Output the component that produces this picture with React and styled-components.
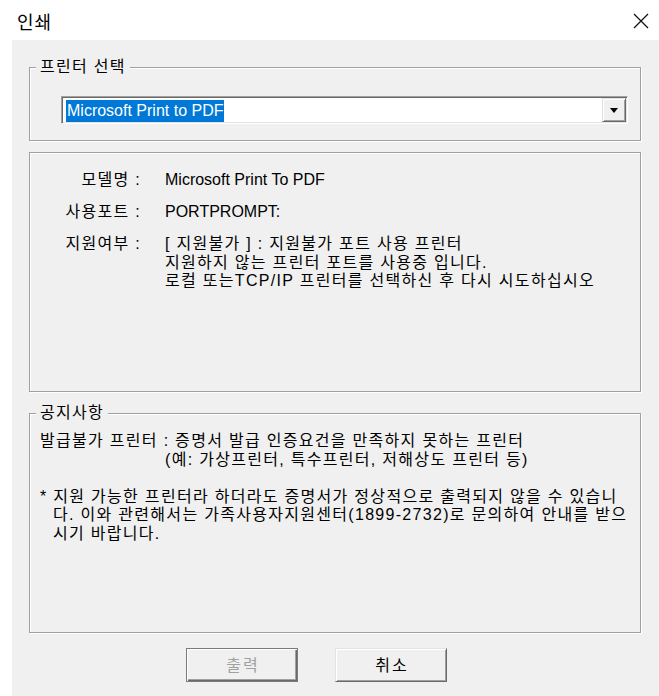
import React from "react";
import styled, { createGlobalStyle } from "styled-components";

const GlobalStyle = createGlobalStyle`
  html, body {
    margin: 0;
    padding: 0;
    background: #ffffff;
  }
  body {
    font-family: "Liberation Sans", "Noto Sans CJK KR", sans-serif;
    color: #000;
  }
`;

const KO_SPACING = "1.3px";

const Window = styled.div`
  width: 659px;
  height: 696px;
  display: flex;
  flex-direction: column;
  overflow: hidden;
  background: #fff;
`;

const TitleBar = styled.div`
  height: 40px;
  flex: none;
  display: flex;
  align-items: center;
  justify-content: space-between;
  padding: 0 10px 0 17px;
`;

const Title = styled.span`
  font-family: "Noto Sans CJK KR", sans-serif;
  font-size: 18px;
  letter-spacing: 1px;
  line-height: 20px;
  padding-top: 1px;
`;

const CloseButton = styled.button`
  width: 16px;
  height: 16px;
  padding: 0;
  border: none;
  background: none;
  display: flex;
  margin-top: 2px;
`;

const Client = styled.div`
  flex: 1;
  margin-left: 12px;
  background: #f0f0f0;
  padding: 17px 17px 0 17px;
  display: flex;
  flex-direction: column;
`;

const Group = styled.fieldset`
  margin: ${(p) => p.$top || 0}px 0 0 0;
  min-width: 0;
  width: 612px;
  box-sizing: border-box;
  height: ${(p) => p.$height}px;
  padding: 0;
  border: 1px solid #a0a0a0;
  box-shadow: 1px 1px 0 #fff, inset 1px 1px 0 #fff;
`;

const Legend = styled.legend`
  padding: 0 4px 0 4px;
  margin-left: 6px;
  font-size: 16px;
  letter-spacing: ${KO_SPACING};
  line-height: 20px;
  background: #f0f0f0;
`;

const GroupBody = styled.div`
  padding: ${(p) => p.$pad};
`;

const Combo = styled.div`
  height: 28px;
  box-sizing: border-box;
  display: flex;
  align-items: center;
  justify-content: space-between;
  background: #fff;
  border: 1px solid;
  border-color: #a0a0a0 #fff #fff #a0a0a0;
  box-shadow: inset 1px 1px 0 #696969, inset -1px -1px 0 #e3e3e3;
  padding: 1px 1px 1px 4px;
`;

const Selected = styled.span`
  background: #0078d7;
  color: #fff;
  font-size: 16px;
  line-height: 22px;
  padding: 0 1px;
  margin-top: 1px;
`;

const DropButton = styled.div`
  width: 24px;
  height: 24px;
  box-sizing: border-box;
  background: #f0f0f0;
  border: 1px solid;
  border-color: #e3e3e3 #696969 #696969 #e3e3e3;
  box-shadow: inset 1px 1px 0 #fff, inset -1px -1px 0 #a0a0a0;
  display: flex;
  align-items: center;
  justify-content: center;
`;

const InfoGrid = styled.div`
  display: grid;
  grid-template-columns: 111px 1fr;
  column-gap: 24px;
  row-gap: 13.5px;
  font-size: 16px;
  line-height: 18.5px;
`;

const Label = styled.div`
  text-align: right;
  white-space: nowrap;
  letter-spacing: ${KO_SPACING};
`;

const Value = styled.div`
  white-space: nowrap;
  letter-spacing: ${(p) => (p.$ko ? KO_SPACING : "0")};
`;

const NoticeText = styled.div`
  font-size: 16px;
  line-height: 18.5px;
  white-space: nowrap;
  letter-spacing: ${KO_SPACING};
`;

const Line = styled.div`
  padding-left: ${(p) => p.$indent || 0}px;
  min-height: 18.5px;
`;

const Bullet = styled.div`
  padding-left: 13px;
  text-indent: -13px;
`;

const ButtonRow = styled.div`
  display: flex;
  gap: 37px;
  padding-left: 157px;
  margin-top: 15px;
`;

const DialogButton = styled.button`
  width: 112px;
  height: 34px;
  box-sizing: border-box;
  font-family: "Noto Sans CJK KR", sans-serif;
  font-size: 16px;
  letter-spacing: 2px;
  background: #f0f0f0;
  color: ${(p) => (p.disabled ? "#a0a0a0" : "#000")};
  border: 1px solid;
  border-color: ${(p) =>
    p.disabled ? "#7a7a7a" : "#e3e3e3 #696969 #696969 #e3e3e3"};
  box-shadow: ${(p) =>
    p.disabled
      ? "inset 1px 1px 0 #fff, inset -1px -1px 0 #696969, inset -2px -2px 0 #a0a0a0"
      : "inset 1px 1px 0 #fff, inset -1px -1px 0 #a0a0a0"};
  padding: 0 0 2px 2px;
`;

const App = () => {
  return (
    <Window>
      <GlobalStyle />
      <TitleBar>
        <Title>인쇄</Title>
        <CloseButton aria-label="닫기">
          <svg width="16" height="16" viewBox="0 0 16 16">
            <path d="M1 1 L15 15 M15 1 L1 15" stroke="#111" strokeWidth="1.3" fill="none" />
          </svg>
        </CloseButton>
      </TitleBar>
      <Client>
        <Group $height={84}>
          <Legend>프린터 선택</Legend>
          <GroupBody $pad="19px 12px 0 31px">
            <Combo>
              <Selected>Microsoft Print to PDF</Selected>
              <DropButton>
                <svg width="8" height="5" viewBox="0 0 8 5">
                  <path d="M0 0 H8 L4 5 Z" fill="#000" />
                </svg>
              </DropButton>
            </Combo>
          </GroupBody>
        </Group>

        <Group $top={11} $height={240}>
          <GroupBody $pad="18px 0 0 0">
            <InfoGrid>
              <Label>모델명 :</Label>
              <Value>Microsoft Print To PDF</Value>
              <Label>사용포트 :</Label>
              <Value>PORTPROMPT:</Value>
              <Label>지원여부 :</Label>
              <Value $ko>
                [ 지원불가 ] : 지원불가 포트 사용 프린터
                <br />
                지원하지 않는 프린터 포트를 사용중 입니다.
                <br />
                로컬 또는TCP/IP 프린터를 선택하신 후 다시 시도하십시오
              </Value>
            </InfoGrid>
          </GroupBody>
        </Group>

        <Group $top={11} $height={230}>
          <Legend>공지사항</Legend>
          <GroupBody $pad="9px 0 0 10px">
            <NoticeText>
              <Line>발급불가 프린터 : 증명서 발급 인증요건을 만족하지 못하는 프린터</Line>
              <Line $indent={125}>(예: 가상프린터, 특수프린터, 저해상도 프린터 등)</Line>
              <Line />
              <Bullet>
                * 지원 가능한 프린터라 하더라도 증명서가 정상적으로 출력되지 않을 수 있습니
                <br />
                다. 이와 관련해서는 가족사용자지원센터(1899-2732)로 문의하여 안내를 받으
                <br />
                시기 바랍니다.
              </Bullet>
            </NoticeText>
          </GroupBody>
        </Group>

        <ButtonRow>
          <DialogButton disabled>출력</DialogButton>
          <DialogButton>취소</DialogButton>
        </ButtonRow>
      </Client>
    </Window>
  );
};

export default App;
